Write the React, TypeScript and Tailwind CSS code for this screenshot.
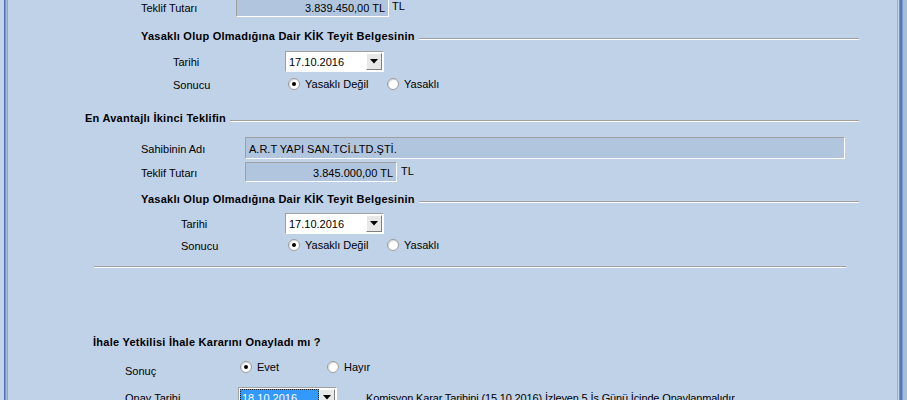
const FONT = "font-['Liberation_Sans',Arial,sans-serif]";

function ReadBox({ w, h, text, align = "right" }: { w: number; h: number; text: string; align?: "left" | "right" }) {
  return (
    <div
      className={`flex items-center border-t border-l border-t-[#a0a0a0] border-l-[#a0a0a0] border-b border-r border-b-white border-r-white bg-[#b1c5de] px-[3px] pt-[1px] text-[11px] text-black ${align === "right" ? "justify-end" : "justify-start"}`}
      style={{ width: w, height: h }}
    >
      {text}
    </div>
  );
}

function Combo({ value, selected = false }: { value: string; selected?: boolean }) {
  return (
    <div className="flex h-[21px] w-[99px] border border-t-[#a0a0a0] border-l-[#a0a0a0] border-b-white border-r-white bg-white p-[1px]">
      <div className={`flex flex-1 items-center text-[11px] ${selected ? "border border-dotted border-[#202020] bg-[#3399ff] pl-[1px] text-white" : "pl-[2px] text-black"}`}>
        {value}
      </div>
      <div className="flex w-[16px] items-center justify-center border border-t-white border-l-white border-b-[#808080] border-r-[#808080] bg-[#e8e8e8]">
        <svg width="8" height="5" viewBox="0 0 8 5">
          <path d="M0 0h8L4 4.5z" fill="#000" />
        </svg>
      </div>
    </div>
  );
}

function Radio({ on }: { on: boolean }) {
  return (
    <div className="flex h-[12px] w-[12px] items-center justify-center rounded-full border border-[#9a9a9a] bg-white shadow-[inset_1px_1px_1px_rgba(0,0,0,0.15)]">
      {on && <div className="h-[4px] w-[4px] rounded-full bg-black" />}
    </div>
  );
}

function Option({ on, label, w }: { on: boolean; label: string; w?: number }) {
  return (
    <div className="flex items-center gap-[5px]" style={w ? { width: w } : undefined}>
      <Radio on={on} />
      <span className="text-[11px] text-black">{label}</span>
    </div>
  );
}

function Heading({ text, pad, mt, lineTo = true }: { text: string; pad: number; mt: number; lineTo?: boolean }) {
  return (
    <div className="flex h-[14px] items-start" style={{ paddingLeft: pad, marginTop: mt }}>
      <span className="text-[11px] leading-[14px] font-bold tracking-[0.25px] text-black whitespace-nowrap">{text}</span>
      {lineTo && <div className="mt-[9px] mr-[38px] ml-[4px] h-[2px] flex-1 border-t border-t-[#a0a0a0] border-b border-b-white" />}
    </div>
  );
}

export default function App() {
  return (
    <div className={`flex h-[400px] w-[907px] overflow-hidden bg-[#c0d2e8] ${FONT}`}>
      <div className="flex w-[8px] shrink-0">
        <div className="w-[4px] bg-[#c4d4ec]" />
        <div className="w-[1px] bg-[#4f6fae]" />
        <div className="w-[1px] bg-[#7d98c8]" />
        <div className="w-[1px] bg-[#a9bbdb]" />
        <div className="w-[1px] bg-[#90a6c9]" />
      </div>

      <div className="flex flex-1 flex-col text-[11px] leading-[14px] text-black">
        {/* first offer amount (cut at top) */}
        <div className="mt-[-3px] flex h-[20px] items-center pl-[133px]">
          <span className="w-[95px] pt-[2px]">Teklif Tutarı</span>
          <ReadBox w={153} h={20} text="3.839.450,00 TL" />
          <span className="ml-[3px] -mt-[3px]">TL</span>
        </div>

        <Heading text="Yasaklı Olup Olmadığına Dair KİK Teyit Belgesinin" pad={133} mt={12} />

        <div className="mt-[8px] flex h-[21px] items-center pl-[165px]">
          <span className="w-[112px] pt-[1px]">Tarihi</span>
          <Combo value="17.10.2016" />
        </div>
        <div className="mt-[4px] flex h-[16px] items-center pl-[165px]">
          <span className="w-[115px] pt-[2px]">Sonucu</span>
          <Option on label="Yasaklı Değil" w={99} />
          <Option on={false} label="Yasaklı" />
        </div>

        <Heading text="En Avantajlı İkinci Teklifin" pad={77} mt={19} />

        <div className="mt-[12px] flex h-[22px] items-center pl-[133px]">
          <span className="w-[104px] pt-[1px]">Sahibinin Adı</span>
          <ReadBox w={600} h={22} text="A.R.T YAPI SAN.TCİ.LTD.ŞTİ." align="left" />
        </div>
        <div className="mt-[3px] flex h-[20px] items-center pl-[133px]">
          <span className="w-[104px] pt-[1px]">Teklif Tutarı</span>
          <ReadBox w={152} h={20} text="3.845.000,00 TL" />
          <span className="ml-[4px] -mt-[3px]">TL</span>
        </div>

        <Heading text="Yasaklı Olup Olmadığına Dair KİK Teyit Belgesinin" pad={133} mt={10} />

        <div className="mt-[7px] flex h-[21px] items-center pl-[173px]">
          <span className="w-[104px] pt-[1px]">Tarihi</span>
          <Combo value="17.10.2016" />
        </div>
        <div className="mt-[3px] flex h-[16px] items-center pl-[173px]">
          <span className="w-[107px] pt-[2px]">Sonucu</span>
          <Option on label="Yasaklı Değil" w={99} />
          <Option on={false} label="Yasaklı" />
        </div>

        <div className="mt-[13px] ml-[86px] h-[2px] w-[752px] border-t border-t-[#a0a0a0] border-b border-b-white" />

        <Heading text="İhale Yetkilisi İhale Kararını Onayladı mı ?" pad={85} mt={67} lineTo={false} />

        <div className="mt-[11px] flex h-[16px] items-start pl-[117px]">
          <span className="mt-[4px] w-[115px]">Sonuç</span>
          <div className="flex h-[14px] items-center">
            <Option on label="Evet" w={87} />
            <Option on={false} label="Hayır" />
          </div>
        </div>

        <div className="mt-[11px] flex h-[21px] items-center pl-[117px]">
          <span className="w-[113px]">Onay Tarihi</span>
          <Combo value="18.10.2016" selected />
          <span className="ml-[29px] whitespace-nowrap tracking-[-0.15px]">
            Komisyon Karar Tarihini (15.10.2016) İzleyen 5 İş Günü İçinde Onaylanmalıdır
          </span>
        </div>
      </div>

      <div className="flex w-[10px] shrink-0">
        <div className="w-[1px] bg-[#9fb0d0]" />
        <div className="w-[1px] bg-[#c8d4e8]" />
        <div className="w-[1px] bg-[#7891c0]" />
        <div className="w-[2px] bg-[#5a78b0]" />
        <div className="w-[1px] bg-[#7d98c8]" />
        <div className="flex-1 bg-[#a8bcdc]" />
      </div>
    </div>
  );
}
